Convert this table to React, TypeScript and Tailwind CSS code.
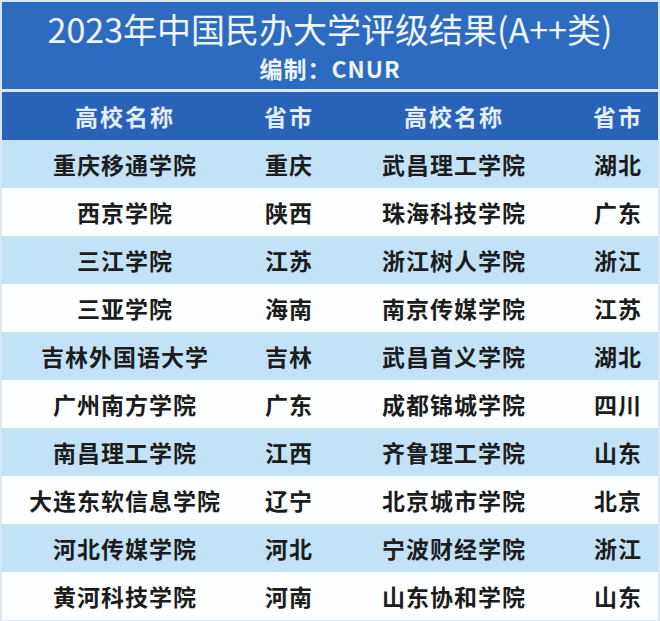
const rows: [string, string, string, string][] = [
  ['重庆移通学院', '重庆', '武昌理工学院', '湖北'],
  ['西京学院', '陕西', '珠海科技学院', '广东'],
  ['三江学院', '江苏', '浙江树人学院', '浙江'],
  ['三亚学院', '海南', '南京传媒学院', '江苏'],
  ['吉林外国语大学', '吉林', '武昌首义学院', '湖北'],
  ['广州南方学院', '广东', '成都锦城学院', '四川'],
  ['南昌理工学院', '江西', '齐鲁理工学院', '山东'],
  ['大连东软信息学院', '辽宁', '北京城市学院', '北京'],
  ['河北传媒学院', '河北', '宁波财经学院', '浙江'],
  ['黄河科技学院', '河南', '山东协和学院', '山东'],
];

const font = { fontFamily: '"Noto Sans CJK SC", "Liberation Sans", sans-serif' };

export default function App() {
  return (
    <div
      className="w-[660px] h-[621px] overflow-hidden bg-[#dbe7f2] p-[2px] flex flex-col"
      style={font}
    >
      <div className="h-[87px] shrink-0 bg-[#2d6bc1] flex flex-col items-center text-[#eef5fc]">
        <h1 className="mt-[8px] text-[34px] leading-[38px] font-normal">2023年中国民办大学评级结果(A++类)</h1>
        <p className="mt-[7px] text-[23px] leading-[26px] font-bold tracking-[1px]">编制：CNUR</p>
      </div>

      <div className="mt-[3px] h-[48px] shrink-0 bg-[#2863b8] grid grid-cols-[246px_82px_248px_80px] items-center text-[23px] font-bold text-[#e4eef9]">
        <span className="text-center tracking-[2px]">高校名称</span>
        <span className="text-center tracking-[2px]">省市</span>
        <span className="text-center tracking-[2px]">高校名称</span>
        <span className="text-center tracking-[2px]">省市</span>
      </div>

      {rows.map((r, i) => (
        <div
          key={r[0]}
          className={
            'h-[48px] shrink-0 grid grid-cols-[246px_82px_248px_80px] items-center text-[23px] font-bold text-[#1c1c1c] ' +
            (i % 2 === 0 ? 'bg-[#c2e3f7]' : 'bg-[#fdfeff]')
          }
        >
          <span className="text-center tracking-[1px]">{r[0]}</span>
          <span className="text-center tracking-[1px]">{r[1]}</span>
          <span className="text-center tracking-[1px]">{r[2]}</span>
          <span className="text-center tracking-[1px]">{r[3]}</span>
        </div>
      ))}
    </div>
  );
}
